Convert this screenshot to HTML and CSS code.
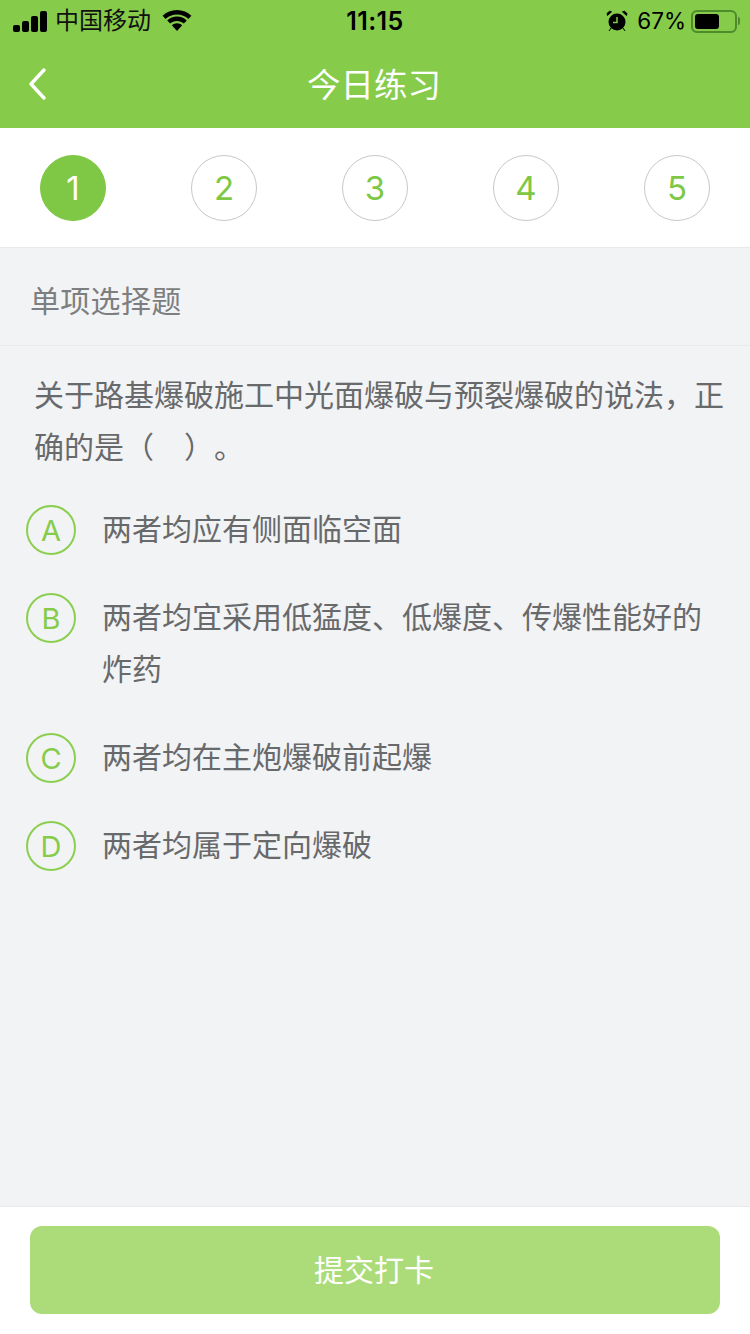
FILE: index.html
```html
<!DOCTYPE html>
<html lang="zh">
<head>
<meta charset="utf-8">
<title>今日练习</title>
<link rel="stylesheet" href="styles.css">
</head>
<body>
<div class="page">
  <header class="header">
    <div class="status">
      <div class="status-left">
        <svg class="signal" width="34" height="21" viewBox="0 0 34 21"><rect x="0" y="14" width="7" height="7" rx="2"/><rect x="9" y="10" width="7" height="11" rx="2"/><rect x="18" y="5" width="7" height="16" rx="2"/><rect x="27" y="0" width="7" height="21" rx="2"/></svg>
        <span class="carrier">中国移动</span>
        <svg class="wifi" width="30" height="22" viewBox="0 0 30 22"><path d="M15 4.500c4.400 0 8.400 1.700 11.400 4.500l3-3.200C25.700 2.200 20.600 0 15 0S4.300 2.200.6 5.800l3 3.200C6.600 6.200 10.600 4.500 15 4.500z"/><path d="M15 11c2.600 0 5 1 6.800 2.600l3-3.200C22.200 8 18.800 6.500 15 6.500S7.800 8 5.200 10.400l3 3.200C10 12 12.400 11 15 11z"/><path d="M15 13.200c-2 0-3.800.8-5.200 2l5.200 5.800 5.200-5.800c-1.400-1.200-3.200-2-5.200-2z"/></svg>
      </div>
      <div class="time">11:15</div>
      <div class="status-right">
        <svg class="alarm" width="22" height="22" viewBox="0 0 22 22"><circle cx="11" cy="12" r="8.500"/><path d="M1.500 5.500 5.500 1.800 3.600 1.200 1 3.500zM20.500 5.500 16.500 1.800 18.400 1.200 21 3.500zM5 18l-2 3M17 18l2 3" stroke="#000" stroke-width="1"/><path d="M11 7v5.500H7" fill="none" stroke="#86cc4a" stroke-width="1.500"/></svg>
        <span class="percent">67%</span>
        <span class="battery"><span class="battery-level"></span></span>
        <span class="battery-tip"></span>
      </div>
    </div>
    <div class="navbar">
      <svg class="back" width="22" height="34" viewBox="0 0 22 34"><path d="M17 3 4 17l13 14" fill="none" stroke="#fff" stroke-width="3.400" stroke-linecap="round" stroke-linejoin="round"/></svg>
      <h1 class="title">今日练习</h1>
    </div>
  </header>

  <nav class="steps">
    <span class="step step-active">1</span>
    <span class="step">2</span>
    <span class="step">3</span>
    <span class="step">4</span>
    <span class="step">5</span>
  </nav>

  <main class="content">
    <div class="qtype">单项选择题</div>
    <p class="question">关于路基爆破施工中光面爆破与预裂爆破的说法，正确的是（　）。</p>
    <ul class="options">
      <li class="option"><span class="letter">A</span><span class="option-text">两者均应有侧面临空面</span></li>
      <li class="option"><span class="letter">B</span><span class="option-text">两者均宜采用低猛度、低爆度、传爆性能好的炸药</span></li>
      <li class="option"><span class="letter">C</span><span class="option-text">两者均在主炮爆破前起爆</span></li>
      <li class="option"><span class="letter">D</span><span class="option-text">两者均属于定向爆破</span></li>
    </ul>
  </main>

  <footer class="footer">
    <button class="submit" type="button">提交打卡</button>
  </footer>
</div>
</body>
</html>
```
FILE: styles.css
```css
* { box-sizing: border-box; }
html, body { margin: 0; padding: 0; }
body {
  width: 750px;
  height: 1334px;
  overflow: hidden;
  font-family: "Liberation Sans", "Noto Sans CJK SC", sans-serif;
  background: #f2f3f5;
  text-spacing-trim: space-all;
}
.page { display: flex; flex-direction: column; height: 1334px; }

.header { height: 128px; background: #86cc4a; flex: none; }
.status {
  height: 40px;
  display: flex;
  align-items: center;
  justify-content: space-between;
  position: relative;
  padding: 2px 10px 0 13px;
  color: #000;
}
.status-left { display: flex; align-items: center; }
.signal { margin-right: 8px; }
.carrier { font-size: 24px; line-height: 40px; color: #111; }
.wifi { margin-left: 11px; }
.time {
  position: absolute;
  left: 0; right: 0;
  text-align: center;
  font-family: Inter, "Liberation Sans", sans-serif;
  font-size: 25px;
  font-weight: 600;
  letter-spacing: 0.4px;
  line-height: 40px;
  pointer-events: none;
}
.status-right { display: flex; align-items: center; }
.alarm { margin-right: 9px; }
.percent { font-family: Inter, "Liberation Sans", sans-serif; font-size: 22.5px; line-height: 40px; margin-right: 5px; }
.battery {
  width: 46px; height: 23px;
  border: 2px solid #4f8a2b;
  border-radius: 6px;
  padding: 2px;
  display: flex;
}
.battery-level { width: 24px; background: #000; border-radius: 3px; }
.battery-tip { width: 2px; height: 8px; background: #4f8a2b; margin-left: 1px; border-radius: 0 2px 2px 0; }

.navbar { height: 88px; display: flex; align-items: center; justify-content: center; position: relative; }
.back { position: absolute; left: 27px; top: 27px; }
.title { margin: 0; font-size: 33.5px; font-weight: 400; color: #fff; position: relative; top: -2px; left: -1px; }

.steps {
  height: 120px;
  flex: none;
  background: #fff;
  border-bottom: 1px solid #e8e9eb;
  display: flex;
  align-items: center;
  justify-content: space-between;
  padding: 0 40px;
}
.step {
  width: 66px; height: 66px;
  border-radius: 50%;
  border: 1px solid #c8c8c8;
  color: #7fc846;
  font-family: Inter, "Liberation Sans", sans-serif;
  font-weight: 400;
  font-size: 33px;
  display: flex; align-items: center; justify-content: center;
}
.step-active { background: #7fc846; border-color: #7fc846; color: #fff; }

.content { flex: 1; min-height: 0; }
.qtype {
  height: 98px;
  border-bottom: 1px solid #e9eaec;
  padding: 0 0 0 30px;
  font-size: 30px;
  letter-spacing: 0.3px;
  line-height: 108px;
  color: #7c7e80;
}
.question {
  margin: 0;
  padding: 24px 25px 0 34px;
  font-size: 30px;
  line-height: 52px;
  color: #68696b;
}
.options { list-style: none; margin: 30px 0 0; padding: 0; }
.option { display: flex; padding: 0 40px 0 26px; margin-bottom: 36px; }
.letter {
  flex: none;
  width: 50px; height: 50px;
  margin-top: 1px;
  border-radius: 50%;
  border: 2px solid #8ccf50;
  color: #86cc4a;
  font-family: Inter, "Liberation Sans", sans-serif;
  font-weight: 400;
  font-size: 29px;
  display: flex; align-items: center; justify-content: center;
}
.option-text { margin-left: 26px; font-size: 30px; line-height: 52px; color: #68696b; }

.footer {
  height: 128px;
  flex: none;
  background: #fff;
  border-top: 1px solid #e8e9eb;
  padding: 19px 30px 0;
}
.submit {
  display: block;
  width: 690px; height: 88px;
  border: 0;
  padding: 0 2px 4px 0;
  border-radius: 12px;
  background: #abdc79;
  color: #fff;
  font: 400 30px "Liberation Sans", "Noto Sans CJK SC", sans-serif;
}
```
